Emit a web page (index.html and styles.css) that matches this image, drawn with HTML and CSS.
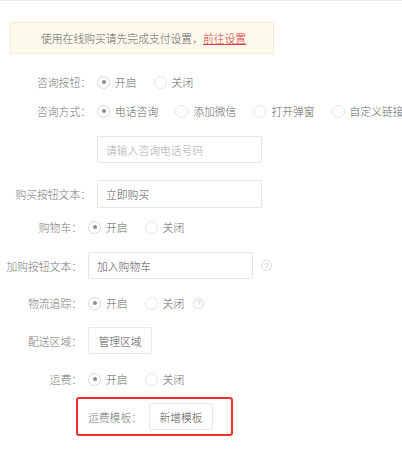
FILE: index.html
```html
<!DOCTYPE html>
<html lang="zh-CN">
<head>
<meta charset="utf-8">
<title>设置</title>
<link rel="stylesheet" href="styles.css">
</head>
<body>
<div class="page">
  <div class="notice">使用在线购买请先完成支付设置，<a class="notice-link" href="#">前往设置</a></div>

  <div class="form">
    <div class="row row-radio row-1 group-a">
      <div class="label">咨询按钮：</div>
      <div class="options">
        <span class="opt"><span class="radio checked"></span>开启</span>
        <span class="opt"><span class="radio"></span>关闭</span>
      </div>
    </div>

    <div class="row row-radio row-2 group-a">
      <div class="label">咨询方式：</div>
      <div class="options">
        <span class="opt"><span class="radio checked"></span>电话咨询</span>
        <span class="opt"><span class="radio"></span>添加微信</span>
        <span class="opt"><span class="radio"></span>打开弹窗</span>
        <span class="opt"><span class="radio"></span>自定义链接</span>
      </div>
    </div>

    <div class="row row-input row-3 group-a">
      <div class="label"></div>
      <div class="input placeholder">请输入咨询电话号码</div>
    </div>

    <div class="row row-input row-4 group-a">
      <div class="label">购买按钮文本：</div>
      <div class="input">立即购买</div>
    </div>

    <div class="row row-radio row-5 group-b">
      <div class="label">购物车：</div>
      <div class="options">
        <span class="opt"><span class="radio checked"></span>开启</span>
        <span class="opt"><span class="radio"></span>关闭</span>
      </div>
    </div>

    <div class="row row-input row-6 group-b">
      <div class="label">加购按钮文本：</div>
      <div class="input">加入购物车</div>
      <span class="help help-input">?</span>
    </div>

    <div class="row row-radio row-7 group-b">
      <div class="label">物流追踪：</div>
      <div class="options">
        <span class="opt"><span class="radio checked"></span>开启</span>
        <span class="opt"><span class="radio"></span>关闭</span>
      </div>
      <span class="help help-radio">?</span>
    </div>

    <div class="row row-input row-8 group-b">
      <div class="label">配送区域：</div>
      <div class="btn">管理区域</div>
    </div>

    <div class="row row-radio row-9 group-b">
      <div class="label">运费：</div>
      <div class="options">
        <span class="opt"><span class="radio checked"></span>开启</span>
        <span class="opt"><span class="radio"></span>关闭</span>
      </div>
    </div>

    <div class="highlight">
      <span class="hl-label">运费模板：</span>
      <div class="btn">新增模板</div>
    </div>
  </div>
</div>
</body>
</html>
```

FILE: styles.css
```css
html, body {
  margin: 0;
  padding: 0;
  background: #ffffff;
}

body {
  font-family: "Noto Sans CJK SC", "Noto Sans", sans-serif;
  font-size: 10.8px;
  font-weight: 300;
  color: #666;
}

.page {
  border-top: 1px solid #ececec;
  padding: 21px 0 20px 10px;
}

.notice {
  box-sizing: border-box;
  width: 264px;
  height: 32px;
  display: flex;
  align-items: center;
  padding-left: 30px;
  background: #fdf9ec;
  border: 1px solid #f6ebcf;
  color: #666;
  white-space: nowrap;
}

.notice-link {
  color: #e0383e;
  text-decoration: underline;
}

.form {
  display: flex;
  flex-direction: column;
  margin-left: -10px;
}

.row {
  display: flex;
  align-items: center;
  white-space: nowrap;
}

.row-radio { height: 20px; }
.row-input { height: 27px; }

.label {
  box-sizing: border-box;
  text-align: right;
  flex: none;
  color: #777;
}

.group-a .label { width: 97px; padding-right: 6px; }
.group-b .label { width: 88px; padding-right: 6px; }

.row-1 { margin-top: 18px; }
.row-2 { margin-top: 9px; }
.row-3 { margin-top: 15px; }
.row-4 { margin-top: 17px; height: 28px; }
.row-5 { margin-top: 9px; }
.row-6 { margin-top: 15px; }
.row-7 { margin-top: 14px; }
.row-8 { margin-top: 14px; }
.row-9 { margin-top: 15px; }

.options {
  display: flex;
  align-items: center;
  gap: 17px;
}

.opt {
  display: inline-flex;
  align-items: center;
  gap: 5px;
  color: #666;
}

.radio {
  box-sizing: border-box;
  width: 13px;
  height: 13px;
  border-radius: 50%;
  border: 1px solid #e4e4e4;
  background: #fff;
  position: relative;
  flex: none;
}

.radio.checked {
  border-color: #d8d8d8;
}

.radio.checked::after {
  content: "";
  position: absolute;
  left: 50%;
  top: 50%;
  width: 4px;
  height: 4px;
  margin: -2px 0 0 -2px;
  border-radius: 50%;
  background: #8c8c8c;
}

.input {
  box-sizing: border-box;
  width: 165px;
  height: 100%;
  border: 1px solid #e6e6e6;
  border-radius: 2px;
  display: flex;
  align-items: center;
  padding-left: 8px;
  color: #555;
  background: #fff;
}

.input.placeholder { color: #aaa; }

.btn {
  box-sizing: border-box;
  width: 64px;
  height: 27px;
  border: 1px solid #e8e8e8;
  border-radius: 2px;
  display: flex;
  align-items: center;
  justify-content: center;
  color: #555;
  background: #fff;
}

.help {
  box-sizing: border-box;
  width: 11px;
  height: 11px;
  border: 1px solid #dcdcdc;
  border-radius: 50%;
  display: inline-flex;
  align-items: center;
  justify-content: center;
  font-family: "Liberation Sans", sans-serif;
  font-size: 8px;
  line-height: 1;
  color: #c4c4c4;
}

.help-input { margin-left: 8px; }
.help-radio { margin-left: 9px; }

.highlight {
  box-sizing: border-box;
  margin-top: 8px;
  margin-left: 76px;
  width: 157px;
  height: 39px;
  border: 2px solid #f0302c;
  border-radius: 3px;
  display: flex;
  align-items: center;
  padding-left: 10px;
  white-space: nowrap;
}

.hl-label {
  width: 61px;
  flex: none;
  color: #777;
}
```
